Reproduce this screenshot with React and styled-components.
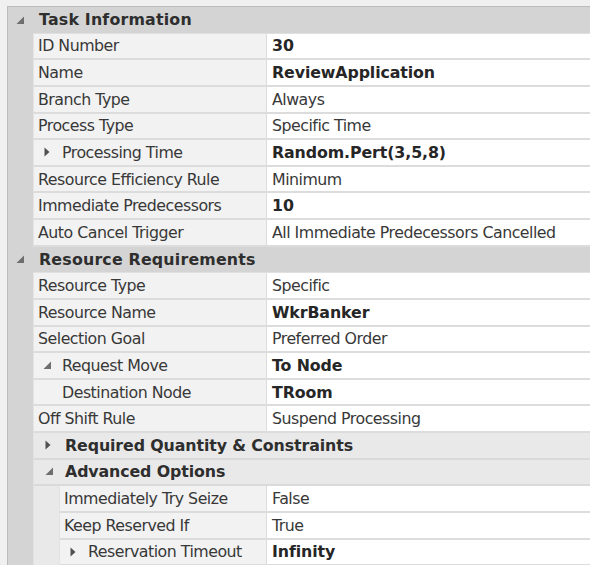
import React from 'react';
import styled, { createGlobalStyle } from 'styled-components';

const GlobalStyle = createGlobalStyle`
  html, body {
    margin: 0;
    padding: 0;
    background: #f0f0f0;
  }
  body {
    font-family: "DejaVu Sans", "Liberation Sans", sans-serif;
    overflow: hidden;
  }
`;

const ROW_H = '26.63px';

const Grid = styled.div`
  margin: 6px 0 0 7px;
  border-top: 1px solid #bcbcbc;
  border-left: 1px solid #bcbcbc;
  background: #ffffff;
  display: flex;
  flex-direction: column;
`;

const Row = styled.div`
  display: flex;
  height: ${ROW_H};
  box-sizing: border-box;
`;

const Gutter = styled.div`
  flex: 0 0 25px;
  background: ${p => (p.$sub ? '#e9e9e9' : '#d4d4d4')};
  display: flex;
  align-items: center;
  justify-content: center;
  ${p => p.$sub && 'border-left: 1px solid #e2e2e2;'}
`;

const CategoryTitle = styled.div`
  flex: 1;
  background: #d4d4d4;
  display: flex;
  align-items: center;
  padding-left: 6px;
  font-weight: bold;
  font-size: 15.8px;
  letter-spacing: 0.2px;
  color: #2e2e2e;
  border-bottom: 1px solid #e0e0e0;
`;

const SubHeader = styled.div`
  flex: 1;
  display: flex;
  align-items: center;
  background: #e9e9e9;
  border-left: 1px solid #e2e2e2;
  border-bottom: 2px solid #dadada;
  font-weight: bold;
  font-size: 15.8px;
  letter-spacing: -0.1px;
  color: #2e2e2e;
`;

const SubSlot = styled.div`
  flex: 0 0 24px;
  display: flex;
  align-items: center;
  padding-left: 11px;
  box-sizing: border-box;
`;

const SubTitle = styled.div`
  padding-left: 7px;
`;

const KeyArea = styled.div`
  flex: 0 0 258px;
  display: flex;
`;

const NameCell = styled.div`
  flex: 1;
  display: flex;
  align-items: center;
  background: #f2f2f2;
  border-left: 1px solid #e4e4e4;
  border-bottom: 2px solid #dcdcdc;
  padding-left: 4px;
  font-size: 15.8px;
  letter-spacing: -0.5px;
  color: #383838;
  white-space: nowrap;
  overflow: hidden;
`;

const Expander = styled.span`
  flex: 0 0 24px;
  display: flex;
  align-items: center;
  padding-left: ${p => (p.$open ? '5px' : '6px')};
  box-sizing: border-box;
`;

const ValueCell = styled.div`
  flex: 1;
  display: flex;
  align-items: center;
  background: #ffffff;
  border-left: 1px solid #dcdcdc;
  border-bottom: 2px solid #dcdcdc;
  padding-left: 5px;
  font-size: 15.8px;
  font-weight: ${p => (p.$bold ? 'bold' : 'normal')};
  letter-spacing: ${p => (p.$bold ? '-0.1px' : '-0.5px')};
  color: ${p => (p.$bold ? '#262626' : '#383838')};
  white-space: nowrap;
  overflow: hidden;
`;

const OpenIcon = () => (
  <svg width="9" height="9" viewBox="0 0 9 9">
    <polygon points="8,0.5 8,8 0.5,8" fill="#6e6e6e" />
  </svg>
);

const ClosedIcon = () => (
  <svg width="7" height="10" viewBox="0 0 7 10">
    <polygon points="0.5,0.5 5.5,5 0.5,9.5" fill="#505050" />
  </svg>
);

const sections = [
  {
    title: 'Task Information',
    rows: [
      { name: 'ID Number', value: '30', bold: true },
      { name: 'Name', value: 'ReviewApplication', bold: true },
      { name: 'Branch Type', value: 'Always' },
      { name: 'Process Type', value: 'Specific Time' },
      { name: 'Processing Time', value: 'Random.Pert(3,5,8)', bold: true, expander: 'closed' },
      { name: 'Resource Efficiency Rule', value: 'Minimum' },
      { name: 'Immediate Predecessors', value: '10', bold: true },
      { name: 'Auto Cancel Trigger', value: 'All Immediate Predecessors Cancelled' },
    ],
  },
  {
    title: 'Resource Requirements',
    rows: [
      { name: 'Resource Type', value: 'Specific' },
      { name: 'Resource Name', value: 'WkrBanker', bold: true },
      { name: 'Selection Goal', value: 'Preferred Order' },
      { name: 'Request Move', value: 'To Node', bold: true, expander: 'open' },
      { name: 'Destination Node', value: 'TRoom', bold: true, expander: 'none' },
      { name: 'Off Shift Rule', value: 'Suspend Processing' },
    ],
    groups: [
      { title: 'Required Quantity & Constraints', open: false, rows: [] },
      {
        title: 'Advanced Options',
        open: true,
        rows: [
          { name: 'Immediately Try Seize', value: 'False' },
          { name: 'Keep Reserved If', value: 'True' },
          { name: 'Reservation Timeout', value: 'Infinity', bold: true, expander: 'closed' },
        ],
      },
    ],
  },
];

const PropRow = ({ row, nested }) => (
  <Row>
    <KeyArea>
      <Gutter />
      {nested && <Gutter $sub />}
      <NameCell>
        {row.expander && (
          <Expander $open={row.expander === 'open'}>
            {row.expander === 'open' && <OpenIcon />}
            {row.expander === 'closed' && <ClosedIcon />}
          </Expander>
        )}
        {row.name}
      </NameCell>
    </KeyArea>
    <ValueCell $bold={row.bold}>{row.value}</ValueCell>
  </Row>
);

export default function App() {
  return (
    <>
      <GlobalStyle />
      <Grid>
        {sections.map(section => (
          <React.Fragment key={section.title}>
            <Row>
              <Gutter>
                <OpenIcon />
              </Gutter>
              <CategoryTitle>{section.title}</CategoryTitle>
            </Row>
            {section.rows.map(row => (
              <PropRow key={row.name} row={row} />
            ))}
            {(section.groups || []).map(group => (
              <React.Fragment key={group.title}>
                <Row>
                  <Gutter />
                  <SubHeader>
                    <SubSlot>{group.open ? <OpenIcon /> : <ClosedIcon />}</SubSlot>
                    <SubTitle>{group.title}</SubTitle>
                  </SubHeader>
                </Row>
                {group.rows.map(row => (
                  <PropRow key={row.name} row={row} nested />
                ))}
              </React.Fragment>
            ))}
          </React.Fragment>
        ))}
      </Grid>
    </>
  );
}
